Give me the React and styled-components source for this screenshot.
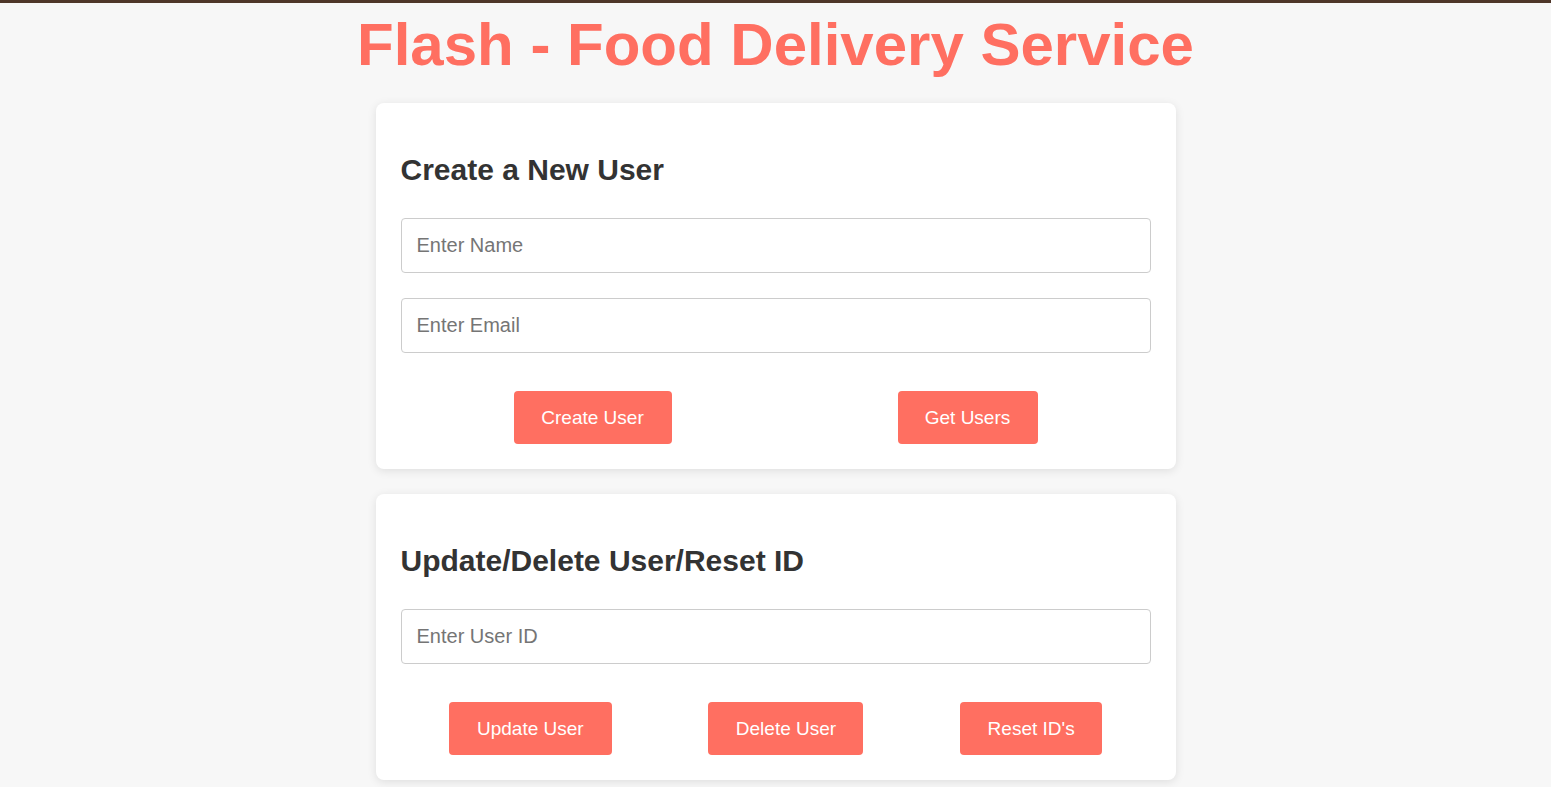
import React from "react"
import styled, { createGlobalStyle } from "styled-components"

const GlobalStyle = createGlobalStyle`
  * {
    box-sizing: border-box;
  }
  body {
    margin: 0;
    background: #f7f7f7;
    font-family: "Liberation Sans", Arial, sans-serif;
    color: #333;
  }
`

export const TopBar = styled.div`
  height: 3px;
  background: #4e3629;
`

export const Page = styled.main`
  display: flex;
  flex-direction: column;
  align-items: center;
  padding-top: 7px;
`

export const Title = styled.h1`
  margin: 0 0 24px;
  font-size: 60px;
  line-height: 69px;
  font-weight: 700;
  color: #ff6f61;
  text-align: center;
`

export const Card = styled.section`
  width: 800px;
  background: #fff;
  border-radius: 8px;
  box-shadow: 0 2px 10px rgba(0, 0, 0, 0.1);
  padding: 50px 25px 25px;
  margin-bottom: 25px;
  display: flex;
  flex-direction: column;
`

export const Heading = styled.h2`
  margin: 0 0 31px;
  font-size: 30px;
  line-height: 34px;
  font-weight: 700;
  color: #333;
`

export const Input = styled.input`
  width: 100%;
  height: 55px;
  padding: 0 15px;
  border: 1px solid #ccc;
  border-radius: 4px;
  font-family: inherit;
  font-size: 20px;
  color: #333;
  margin-bottom: ${(p) => (p.$last ? "38px" : "25px")};
  outline: none;

  &::placeholder {
    color: #757575;
  }
`

export const ButtonRow = styled.div`
  display: flex;
  justify-content: space-around;
`

export const Button = styled.button`
  height: 53px;
  padding: 0 25px;
  border: none;
  border-radius: 4px;
  background: #ff6f61;
  color: #fff;
  font-family: inherit;
  font-size: 19px;
  cursor: pointer;
`

const App = () => {
  return (
    <>
      <GlobalStyle />
      <TopBar />
      <Page>
        <Title>Flash - Food Delivery Service</Title>
        <Card>
          <Heading>Create a New User</Heading>
          <Input placeholder="Enter Name" />
          <Input placeholder="Enter Email" $last />
          <ButtonRow>
            <Button style={{ width: 158 }}>Create User</Button>
            <Button style={{ width: 140 }}>Get Users</Button>
          </ButtonRow>
        </Card>
        <Card>
          <Heading>Update/Delete User/Reset ID</Heading>
          <Input placeholder="Enter User ID" $last />
          <ButtonRow>
            <Button style={{ width: 163 }}>Update User</Button>
            <Button style={{ width: 155 }}>Delete User</Button>
            <Button style={{ width: 142 }}>Reset ID's</Button>
          </ButtonRow>
        </Card>
      </Page>
    </>
  )
}

export default App
